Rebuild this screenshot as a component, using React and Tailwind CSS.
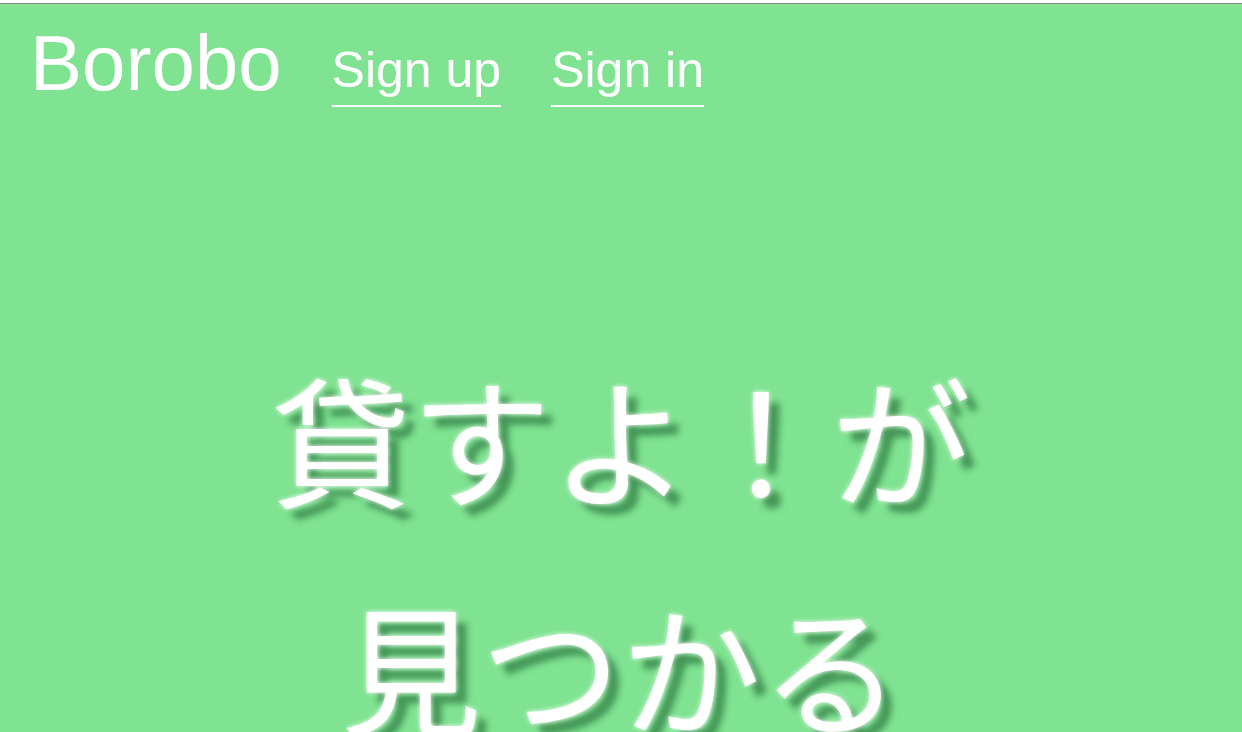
import React from 'react';

function Header() {
    return (
        <div className="flex items-start gap-[50px] px-[30px] pt-[20px] text-white font-['Liberation_Sans','Helvetica',sans-serif]">
            <div className="text-[78px] leading-none">Borobo</div>
            <a href="#" className="mt-[21px] text-[50px] leading-none pb-[10px] border-b-2 border-white">Sign up</a>
            <a href="#" className="mt-[21px] text-[50px] leading-none pb-[10px] border-b-2 border-white">Sign in</a>
        </div>
    );
}

export default function App() {
    return (
        <div className="pt-[3px] bg-white">
            <div className="h-[729px] overflow-hidden bg-[#7fe391] border-t border-[#8a8a8a]">
                <Header/>

                {/* catch copy */}
                <div className="mt-[215px] text-center text-white text-[140px] leading-[228px] font-['Noto_Sans_CJK_JP',sans-serif] [text-shadow:0_0_5px_#ffffff,11px_11px_6px_rgba(0,60,20,0.45)]">
                    貸すよ！が<br/>見つかる
                </div>
            </div>
        </div>
    );
}
